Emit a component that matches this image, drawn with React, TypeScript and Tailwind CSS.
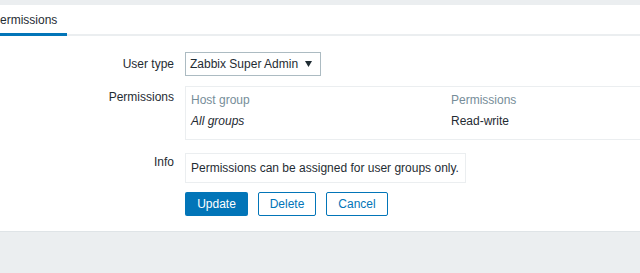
import React from 'react';

const labelCls = 'w-[185px] shrink-0 pr-[11px] text-right leading-[14px]';

export default function App() {
  return (
    <div className="w-[640px] h-[273px] overflow-hidden bg-[#ebeef0] text-[12px] text-[#1f2c33] font-['Liberation_Sans',Arial,sans-serif]">
      <div className="h-[5px] bg-[#ebeef0]" />
      <div className="bg-white border-b border-[#dfe4e7]">
        {/* Tabs */}
        <div className="flex items-end h-[31px]">
          <div className="-ml-[18px] px-[10px] h-[31px] flex items-center border-b-[3px] border-[#0275b8] pt-[1px]">
            Permissions
          </div>
          <div className="flex-1 border-b-2 border-[#ebeef0]" />
        </div>

        {/* Form */}
        <div className="pt-[16px] pb-[15px]">
          <div className="flex items-center h-[24px]">
            <div className={labelCls}>User type</div>
            <div className="w-[136px] h-[24px] border border-[#acbbc2] flex items-center justify-between pl-[4px] pr-[8px]">
              <span>Zabbix Super Admin</span>
              <svg width="7" height="6" viewBox="0 0 7 6">
                <path d="M0 0 H7 L3.5 6 Z" fill="#1f2c33" />
              </svg>
            </div>
          </div>

          <div className="flex mt-[10px]">
            <div className={`${labelCls} pt-[4px]`}>Permissions</div>
            <div className="w-[560px] h-[54px] shrink-0 border border-[#ebeef0] pt-[2px] pl-[5px]">
              <div className="flex h-[22px] items-center text-[#768d99]">
                <div className="w-[260px]">Host group</div>
                <div>Permissions</div>
              </div>
              <div className="flex h-[20px] items-center">
                <div className="w-[260px] italic">All groups</div>
                <div>Read-write</div>
              </div>
            </div>
          </div>

          <div className="flex mt-[13px]">
            <div className={`${labelCls} pt-[2px]`}>Info</div>
            <div className="w-[281px] h-[30px] border border-[#ebeef0] flex items-center pl-[5px]">
              Permissions can be assigned for user groups only.
            </div>
          </div>

          <div className="flex ml-[185px] mt-[9px] gap-[10px]">
            <button className="w-[63px] h-[24px] rounded-[2px] bg-[#0275b8] text-white">Update</button>
            <button className="w-[58px] h-[24px] rounded-[2px] border border-[#0275b8] text-[#0275b8] bg-white">Delete</button>
            <button className="w-[62px] h-[24px] rounded-[2px] border border-[#0275b8] text-[#0275b8] bg-white">Cancel</button>
          </div>
        </div>
      </div>
    </div>
  );
}
